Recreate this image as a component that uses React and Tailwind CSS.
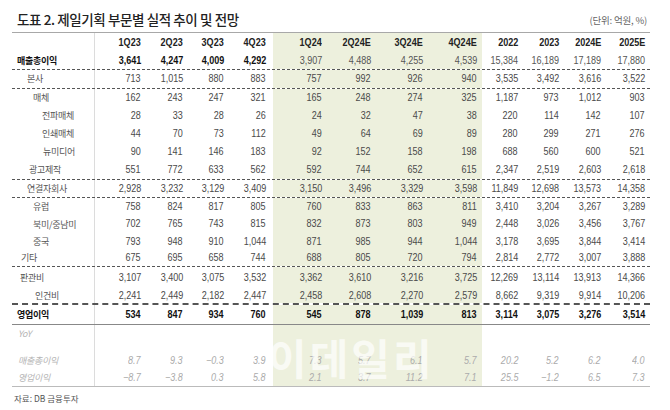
import React from "react";

const num = "font-['Liberation_Sans_Narrow','Liberation_Sans',Arial,sans-serif]";
const kr = "font-['Noto_Sans_CJK_KR','Noto_Sans',sans-serif]";

const cols = [
    "w-[50px] pr-[4px]",
    "w-[42px] pr-[4px]",
    "w-[41px] pr-[4px]",
    "w-[45px] pr-[7px]",
    "w-[55px] pr-[6px] bg-[#edf0dd]",
    "w-[49px] pr-[6px] bg-[#edf0dd]",
    "w-[52px] pr-[6px] bg-[#edf0dd]",
    "w-[53px] pr-[5px] bg-[#edf0dd]",
    "w-[40px] pr-[4px]",
    "w-[41px] pr-[4px]",
    "w-[42px] pr-[4px]",
    "w-[45px] pr-[5px]",
];

const header = ["1Q23", "2Q23", "3Q23", "4Q23", "1Q24", "2Q24E", "3Q24E", "4Q24E", "2022", "2023", "2024E", "2025E"];

// kind: bold | gross | normal | yoy
const rows = [
    { label: "매출총이익", pl: "pl-[5px]", kind: "gross", h: "h-[17px]", line: "border-b border-dashed border-[#555]",
        v: ["3,641", "4,247", "4,009", "4,292", "3,907", "4,488", "4,255", "4,539", "15,384", "16,189", "17,189", "17,880"] },
    { label: "본사", pl: "pl-[15px]", kind: "normal", h: "h-[19px]", line: "border-b border-dashed border-[#555]",
        v: ["713", "1,015", "880", "883", "757", "992", "926", "940", "3,535", "3,492", "3,616", "3,522"] },
    { label: "매체", pl: "pl-[21px]", kind: "normal", h: "h-[18px]",
        v: ["162", "243", "247", "321", "165", "248", "274", "325", "1,187", "973", "1,012", "903"] },
    { label: "전파매체", pl: "pl-[30px]", kind: "normal", h: "h-[18px]",
        v: ["28", "33", "28", "26", "24", "32", "47", "38", "220", "114", "142", "107"] },
    { label: "인쇄매체", pl: "pl-[30px]", kind: "normal", h: "h-[18px]",
        v: ["44", "70", "73", "112", "49", "64", "69", "89", "280", "299", "271", "276"] },
    { label: "뉴미디어", pl: "pl-[31px]", kind: "normal", h: "h-[18px]",
        v: ["90", "141", "146", "183", "92", "152", "158", "198", "688", "560", "600", "521"] },
    { label: "광고제작", pl: "pl-[17px]", kind: "normal", h: "h-[19px]", line: "border-b border-dashed border-[#555]",
        v: ["551", "772", "633", "562", "592", "744", "652", "615", "2,347", "2,519", "2,603", "2,618"] },
    { label: "연결자회사", pl: "pl-[15px]", kind: "normal", h: "h-[18px]", line: "border-b border-dashed border-[#555]",
        v: ["2,928", "3,232", "3,129", "3,409", "3,150", "3,496", "3,329", "3,598", "11,849", "12,698", "13,573", "14,358"] },
    { label: "유럽", pl: "pl-[21px]", kind: "normal", h: "h-[17.5px]",
        v: ["758", "824", "817", "805", "760", "833", "863", "811", "3,410", "3,204", "3,267", "3,289"] },
    { label: "북미/중남미", pl: "pl-[21px]", kind: "normal", h: "h-[17.5px]",
        v: ["702", "765", "743", "815", "832", "873", "803", "949", "2,448", "3,026", "3,456", "3,767"] },
    { label: "중국", pl: "pl-[21px]", kind: "normal", h: "h-[17px]",
        v: ["793", "948", "910", "1,044", "871", "985", "944", "1,044", "3,178", "3,695", "3,844", "3,414"] },
    { label: "기타", pl: "pl-[9px]", kind: "normal", h: "h-[17px]", line: "border-b border-dashed border-[#555]",
        v: ["675", "695", "658", "744", "688", "805", "720", "794", "2,814", "2,772", "3,007", "3,888"] },
    { label: "판관비", pl: "pl-[8px]", kind: "normal", h: "h-[21px]",
        v: ["3,107", "3,400", "3,075", "3,532", "3,362", "3,610", "3,216", "3,725", "12,269", "13,114", "13,913", "14,366"] },
    { label: "인건비", pl: "pl-[23px]", kind: "normal", h: "h-[17px]", line: "border-b-2 border-dashed border-[#555]",
        v: ["2,241", "2,449", "2,182", "2,447", "2,458", "2,608", "2,270", "2,579", "8,662", "9,319", "9,914", "10,206"] },
    { label: "영업이익", pl: "pl-[5px]", kind: "bold", h: "h-[20px]", line: "border-b border-[#888]",
        v: ["534", "847", "934", "760", "545", "878", "1,039", "813", "3,114", "3,075", "3,276", "3,514"] },
    { label: "YoY", pl: "pl-[6px]", kind: "yoy", h: "h-[18px]", v: Array(12).fill("") },
    { label: "", pl: "pl-[6px]", kind: "yoy", h: "h-[9px]", v: Array(12).fill("") },
    { label: "매출총이익", pl: "pl-[6px]", kind: "yoy", h: "h-[18px]",
        v: ["8.7", "9.3", "−0.3", "3.9", "7.3", "5.7", "6.1", "5.7", "20.2", "5.2", "6.2", "4.0"] },
    { label: "영업이익", pl: "pl-[6px]", kind: "yoy", h: "h-[17px]", line: "border-b border-[#bbb]",
        v: ["−8.7", "−3.8", "0.3", "5.8", "2.1", "3.7", "11.2", "7.1", "25.5", "−1.2", "6.5", "7.3"] },
];

const labelStyle = {
    bold: "text-[#111] font-bold",
    gross: "text-[#111] font-bold",
    normal: "text-[#555]",
    yoy: "text-[#b4b4b4] italic",
};

const valueStyle = (kind, i) => {
    if (kind === "bold") return "text-[#111] font-bold";
    if (kind === "gross") return i < 4 ? "text-[#111] font-bold" : "text-[#555]";
    if (kind === "yoy") return "text-[#ababab] italic";
    return "text-[#4a4a4a]";
};

// narrow numerals: squeeze the figures like the report's condensed face
const Num = ({ children }) => (
    <span className="inline-block origin-right scale-x-[0.86]">{children}</span>
);

const Row = ({ row }) => (
    <div className={`flex ${row.h} ${row.line || ""}`}>
        <div className={`w-[83px] shrink-0 flex items-center border-r border-[#dcdcdc] ${row.pl} ${kr} text-[9px] tracking-[-0.3px] ${labelStyle[row.kind]}`}>
            {row.label}
        </div>
        {row.v.map((val, i) => (
            <div
                key={i}
                className={`shrink-0 flex items-center justify-end ${cols[i]} ${num} text-[10.5px] ${valueStyle(row.kind, i)}`}
            >
                <Num>{val}</Num>
            </div>
        ))}
    </div>
);

const App = () => {
    return (
        <div className="relative w-[670px] h-[410px] bg-white overflow-hidden">
            <div className="ml-[12px] w-[638px]">
                <div className="h-[32px] flex items-end justify-between pb-[3px]">
                    <div className={`pl-[5px] ${kr} text-[13.5px] font-medium text-[#222] tracking-[-0.4px]`}>
                        도표 2. 제일기획 부문별 실적 추이 및 전망
                    </div>
                    <div className={`pr-[3px] pb-[2px] ${kr} text-[9.5px] text-[#666] tracking-[-0.2px]`}>(단위: 억원, %)</div>
                </div>
                <div className="border-t-[1.5px] border-[#a8a8a8]">
                    <div className="flex h-[20px]">
                        <div className="w-[83px] shrink-0 border-r border-[#dcdcdc]" />
                        {header.map((h, i) => (
                            <div
                                key={h}
                                className={`shrink-0 flex items-center justify-end ${cols[i]} ${num} text-[10.5px] font-bold text-[#222]`}
                            >
                                <Num>{h}</Num>
                            </div>
                        ))}
                    </div>
                    {rows.map((row, i) => (
                        <Row key={i} row={row} />
                    ))}
                </div>
                <div className={`pl-[2px] pt-[5px] ${kr} text-[8.5px] text-[#555]`}>자료: DB 금융투자</div>
            </div>
            {/* watermark */}
            <div className={`absolute left-[268px] top-[336px] ${kr} text-[42px] font-bold leading-none tracking-[3px] text-white/70 select-none`}>
                이데일리
            </div>
        </div>
    );
};

export default App;
